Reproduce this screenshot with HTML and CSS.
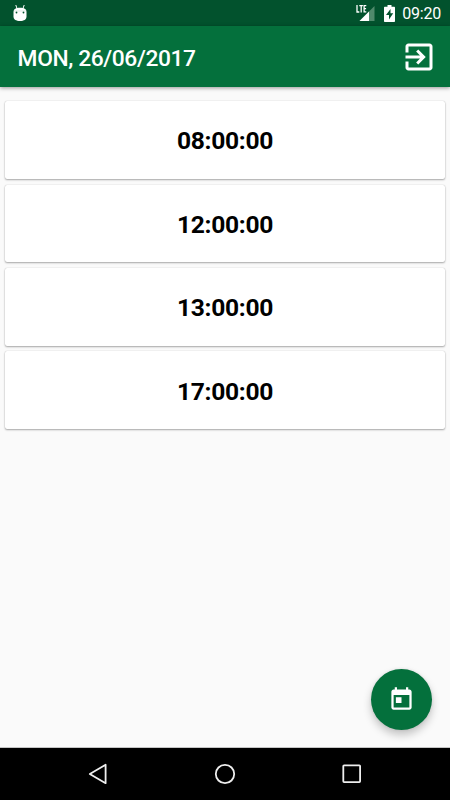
FILE: index.html
```html
<!DOCTYPE html>
<html>
<head>
  <meta charset="UTF-8">
  <title>Mon, 26/06/2017</title>
  <link rel="stylesheet" href="styles.css">
</head>
<body>
  <div class="screen">
    <div class="status-bar">
      <svg class="android" width="16" height="18" viewBox="0 0 16 18">
        <path d="M3.8 1l1.4 4M12.2 1l-1.4 4" stroke="#fff" stroke-width="1"/>
        <path d="M1.5 8c0-3 2.5-4.2 6.5-4.2S14.5 5 14.5 8v4.5c0 3-2.5 4.5-6.5 4.5s-6.5-1.5-6.5-4.5z" fill="#fff"/>
        <circle cx="4.5" cy="8.5" r="0.9" fill="#02522d"/>
        <circle cx="11.5" cy="8.5" r="0.9" fill="#02522d"/>
        <path d="M2 7h12" stroke="#b9d0c4" stroke-width="0.5"/>
      </svg>
      <div class="status-icons">
        <svg width="20" height="18" viewBox="0 0 20 18">
          <path d="M19.5 2v15h-15z" fill="#508a6c"/>
          <path d="M14 7.5V17H4.5z" fill="#fff"/>
          <path d="M0 0h12v9.2H0z" fill="#02522d"/>
          <path d="M2 1v7h2.3M4.3 1.7h3.6M6.2 1.7v6.8M11.3 1.7H9.1v6.2h2.2M9.2 4.7h1.9" stroke="#fff" stroke-width="1.3" fill="none"/>
        </svg>
        <svg class="battery" width="11" height="17" viewBox="0 0 11 17">
          <path d="M3.5 0h4v1.7H10c.6 0 1 .4 1 1V16c0 .6-.4 1-1 1H1c-.6 0-1-.4-1-1V2.7c0-.6.4-1 1-1h2.5z" fill="#fff"/>
          <path d="M6.5 4L2 10h3v4.5L9.2 8.3H6.5z" fill="#02522d"/>
        </svg>
        <span class="clock">09:20</span>
      </div>
    </div>

    <div class="toolbar">
      <h1 class="title">MON, 26/06/2017</h1>
      <svg width="36" height="36" viewBox="0 0 24 24" fill="#fff">
        <path d="M10.09 15.59L11.5 17l5-5-5-5-1.41 1.41L12.67 11H3v2h9.67l-2.58 2.59zM19 3H5c-1.11 0-2 .9-2 2v4h2V5h14v14H5v-4H3v4c0 1.1.89 2 2 2h14c1.1 0 2-.9 2-2V5c0-1.1-.9-2-2-2z"/>
      </svg>
    </div>

    <div class="list">
      <div class="card">08:00:00</div>
      <div class="card">12:00:00</div>
      <div class="card">13:00:00</div>
      <div class="card">17:00:00</div>
    </div>

    <div class="fab">
      <svg width="27" height="27" viewBox="0 0 24 24" fill="#fff">
        <path d="M19 3h-1V1h-2v2H8V1H6v2H5c-1.11 0-1.99.9-1.99 2L3 19c0 1.1.89 2 2 2h14c1.1 0 2-.9 2-2V5c0-1.1-.9-2-2-2zm0 16H5V8h14v11zM7 10h5v5H7z"/>
      </svg>
    </div>

    <div class="nav-bar">
      <svg width="22" height="22" viewBox="0 0 22 22">
        <path d="M18.6 1.8v18.4L2.8 11z"/>
      </svg>
      <svg width="22" height="22" viewBox="0 0 22 22">
        <circle cx="11" cy="11" r="9.2"/>
      </svg>
      <svg width="22" height="22" viewBox="0 0 22 22">
        <rect x="2.3" y="2.3" width="16.8" height="16.8" rx="0.8"/>
      </svg>
    </div>
  </div>
</body>
</html>
```
FILE: styles.css
```css
body {
  margin: 0;
  font-family: Roboto, sans-serif;
  background-color: #fafafa;
}
.screen {
  position: relative;
  display: flex;
  flex-direction: column;
  width: 450px;
  height: 800px;
  overflow: hidden;
}
.status-bar {
  display: flex;
  align-items: center;
  justify-content: space-between;
  box-sizing: border-box;
  height: 26px;
  padding: 0 9px 0 12px;
  background-color: #02522d;
  color: #fff;
}
.android {
  margin-bottom: 1px;
}
.status-icons {
  display: flex;
  align-items: center;
}
.battery {
  margin: 0 7px 0 9px;
}
.clock {
  font-size: 16px;
  letter-spacing: -0.2px;
  line-height: 26px;
  padding-top: 1px;
}
.toolbar {
  display: flex;
  align-items: center;
  justify-content: space-between;
  box-sizing: border-box;
  height: 61px;
  padding: 0 13px 0 17.6px;
  background-color: #04703c;
  box-shadow: 0 1px 4px rgba(0, 0, 0, 0.4);
}
.title {
  margin: 0;
  padding-top: 3px;
  color: #fff;
  font-size: 22.8px;
  font-weight: 500;
  letter-spacing: -0.4px;
}
.list {
  display: flex;
  flex: 1;
  flex-direction: column;
  gap: 5.8px;
  padding: 14.2px 5.4px 0 5.4px;
}
.card {
  display: flex;
  align-items: center;
  justify-content: center;
  box-sizing: border-box;
  height: 77.6px;
  padding-top: 2px;
  background-color: #fff;
  border-radius: 2px;
  box-shadow: 0 1px 2px rgba(0, 0, 0, 0.32), 0 0 1px rgba(0, 0, 0, 0.25);
  color: #000;
  font-size: 24.6px;
  font-weight: 700;
  letter-spacing: -0.3px;
}
/* floating button over the list */
.fab {
  position: absolute;
  right: 17.6px;
  bottom: 70px;
  display: flex;
  align-items: center;
  justify-content: center;
  width: 61px;
  height: 61px;
  border-radius: 50%;
  background-color: #04703c;
  box-shadow: 0 5px 9px rgba(0, 0, 0, 0.22), 0 0 3px rgba(0, 0, 0, 0.1);
}
.nav-bar {
  display: flex;
  align-items: center;
  justify-content: center;
  gap: 105px;
  height: 52px;
  background-color: #000;
  box-shadow: 0 -1px 0 #c4c4c4;
}
.nav-bar svg {
  fill: none;
  stroke: #eee;
  stroke-width: 1.8;
  stroke-linejoin: round;
}
```
